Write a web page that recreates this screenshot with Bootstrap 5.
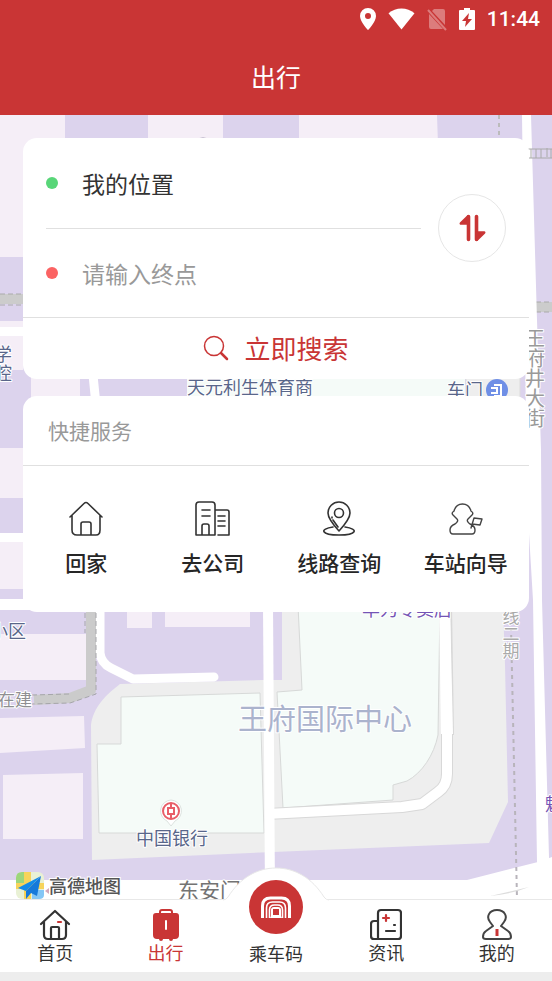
<!DOCTYPE html>
<html lang="zh-CN">
<head>
<meta charset="utf-8">
<meta name="viewport" content="width=device-width, initial-scale=1">
<title>出行</title>
<link href="https://cdn.jsdelivr.net/npm/bootstrap@5.3.0/dist/css/bootstrap.min.css" rel="stylesheet">
<style>
  :root { --brand: #c93535; --ink: #333; --muted: #999; --rule: #e0e0e0; }
  body { font-family: "Noto Sans CJK SC", sans-serif; color: var(--ink); background: #ededed; }
  .app-head { background: var(--brand); }
  .status-line { height: 38px; padding-right: 12px; gap: 12px; font: 500 21px/38px Roboto, sans-serif; }
  .page-title { font-size: 25px; line-height: 77px; font-weight: 400; }
  .map-area { padding: 23px; }
  .map-canvas { inset: 0; }
  .panel-stack { gap: 17px; }
  .panel { background: #fff; border-radius: 14px; }
  .trip-fields { padding: 0 23px; gap: 17px; }
  .trip-row { height: 89px; gap: 24px; }
  .trip-row:first-child { height: 90px; }
  .trip-row + .trip-row { border-top: 1px solid var(--rule); }
  .trip-row input { font-size: 23px; line-height: 34px; color: var(--ink); outline: 0; min-width: 0; }
  .trip-row input::placeholder { color: var(--muted); opacity: 1; }
  .spot { width: 12px; height: 12px; }
  .spot-from { background: #58d678; }
  .spot-to { background: #fb6363; }
  .swap-btn { width: 68px; height: 68px; border: 1px solid #e6e6e6; }
  .search-btn { height: 62px; border-top: 1px solid var(--rule); color: var(--brand); font-size: 26px; line-height: 36px; gap: 15px; padding-bottom: 2px; }
  .quick-title { font-size: 21px; line-height: 69px; padding-left: 25px; color: var(--muted); border-bottom: 1px solid var(--rule); font-weight: 400; }
  .quick-row { padding: 35px 0 34px; }
  .quick-link { font-size: 21px; line-height: 32px; font-weight: 500; color: #262626; gap: 9px; }
  .tab-bar { background: #fff; border-top: 1px solid #e8e8e8; height: 73px; margin-bottom: 9px; }
  .tab-link { font-size: 18px; line-height: 22px; color: var(--ink); padding-top: 8px; }
  .tab-link.active { color: var(--brand); }
  .bump { bottom: 71px; left: 50%; transform: translateX(-50%); }
  .ride-disc { width: 54px; height: 54px; background: var(--brand); margin-top: -28px; margin-bottom: 8px; }
</style>
<script src="https://cdn.jsdelivr.net/npm/bootstrap@5.3.0/dist/js/bootstrap.bundle.min.js"></script>
</head>
<body class="min-vh-100 d-flex flex-column">

<header class="app-head text-white">
  <div class="status-line d-flex justify-content-end align-items-center">
    <svg width="16" height="22" viewBox="0 0 16 22" fill="#fff" fill-rule="evenodd" aria-hidden="true"><path d="M8 0a8 8 0 0 0-8 8c0 6 8 14 8 14s8-8 8-14a8 8 0 0 0-8-8zm0 5a3 3 0 1 1 0 6 3 3 0 0 1 0-6z"/></svg>
    <svg width="27" height="22" viewBox="0 0 28 22" fill="#fff" aria-hidden="true"><path d="M14 22 0.500 5C8-1.500 20-1.500 27.500 5z"/></svg>
    <svg width="20" height="24" viewBox="0 0 20 24" aria-hidden="true"><path fill="#dc7c7c" d="M7 2h9q2 0 2 2v14L5 4zM2 7l14 15H4q-2 0-2-2z"/><path stroke="#dc7c7c" stroke-width="2" d="m1 3 18 20"/></svg>
    <svg width="16" height="22" viewBox="0 0 16 22" aria-hidden="true"><path fill="#fff" d="M5 0h6v2h4a1 1 0 0 1 1 1v18a1 1 0 0 1-1 1H1a1 1 0 0 1-1-1V3a1 1 0 0 1 1-1h4z"/><path fill="#c93535" d="m10 5-7 8h4l-1 6 7-8H9z"/></svg>
    <span>11:44</span>
  </div>
  <h1 class="page-title text-center m-0">出行</h1>
</header>

<main class="map-area flex-grow-1 position-relative overflow-hidden">
  <svg class="map-canvas position-absolute w-100 h-100" viewBox="0 115 552 784" preserveAspectRatio="xMidYMid slice" font-family="'Noto Sans CJK SC', sans-serif" role="img" aria-label="地图">
    <rect y="115" width="552" height="784" fill="#dcd3ed"/>
    <g fill="#f5eef7">
      <path d="M0 115h65v142H0zM148 115h75v30h-75zM299 115h138l1 30H299zM0 321h23v49H0zM31 370h49v30H31zM0 448h30v50H0zM0 542h30v47H0z"/>
      <path d="M0 634h86l2 46H0zM127 605h25v23h-25zM165 605h86v22h-86zM0 718l84-2 1 32-85 5zM3 775l80-2v66H3z"/>
    </g>
    <path fill="#fff" d="M0 327h25v9H0zM0 533h25v9H0zM0 599h40v11H0zM88 370h9l4 40h-9z"/>
    <path fill="#f5fbf8" d="M187 370h278v30H187z"/>
    <path fill="#eee" stroke="#ddd" d="M466 370h54v40h-54z"/>
    <path fill="none" stroke="#ccc" stroke-width="10" d="M0 299h24M528 307h24"/>
    <path fill="none" stroke="#aaa" stroke-dasharray="5 3" d="M0 294h24M0 305h24M528 302h24M528 312h24"/>
    <path fill="none" stroke="#bbb" stroke-width="2" stroke-dasharray="4 4" d="M499 115v24"/>
    <path fill="#c8c1d2" d="m196 139 7-2 7 2z"/>

    <path fill="#eee" d="M91 725c2-18 16-31 29-41l143-4V605h240l2 60 3 137-19 41-216 9-181 8z"/>
    <path fill="#dcd3ed" d="M250 600h32v80h-32z"/>
    <g fill="#f5fbf8" stroke="#d7d9d8">
      <path d="M121 697l139-4 4 140H99l-2-89h24z"/>
      <path d="M298 605l4 85-25 2 6 116 110-8v-15l14-4c15-8 27-26 31-46l2-130z"/>
    </g>
    <path fill="none" stroke="#d8d8d8" stroke-width="12" d="M446 605l2 130"/>
    <path fill="none" stroke="#d8d8d8" stroke-width="12" stroke-linejoin="round" d="M447 734v40q0 12-9 18l-16 12-20 3-135 7"/>
    <path fill="none" stroke="#fff" stroke-width="10" stroke-linejoin="round" d="M445 605l2 130v39q0 12-9 18l-16 12-20 3-135 7"/>
    <path fill="#fff" d="M439 605h11l3 129h-12z"/>
    <path fill="#fff" d="M263 605h10l2 290h-10z"/>
    <path fill="none" stroke="#fff" stroke-width="9" stroke-linejoin="round" stroke-linecap="round" d="M100 605v48q1 10 11 15l22 11 81-2"/>
    <path fill="none" stroke="#cbcbcb" stroke-width="10" stroke-linejoin="round" d="M91 605v85l-21 8-36 2"/>
    <path fill="none" stroke="#a6a6aa" stroke-dasharray="5 3" d="M85 605v28M96 605v89l-26 9-38 1M32 695l37-1"/>
    <path fill="#fff" d="M0 880h467l71-18 14-5v50H0z"/>
    <path fill="#fff" d="M522 115h9l6 205 4 130 1 150 7 257v13l-10 10-2-18-4-262-6-100z"/>
    <path fill="none" stroke="#aaa" d="M528 149h24M528 158h24M531 149v9M536 149v9M541 149v9M547 148v9M551 149v9"/>
    <path fill="none" stroke="#b8b4bb" stroke-width="2" stroke-dasharray="4 4" d="M511 627l6 272"/>
    <path fill="#ddd" d="M490 896q22-2 39-9-17 4-39 9z"/>

    <g fill="#59668a" font-size="18" stroke="#fff" stroke-width="2" paint-order="stroke" stroke-linejoin="round">
      <text x="187" y="394">天元利生体育商</text>
      <text x="447" y="397">车门</text>
      <text x="136" y="845">中国银行</text>
      <text x="-6" y="361">学</text>
      <text x="-6" y="380">腔</text>
      <text x="-10" y="638">小区</text>
    </g>
    <g stroke="#fff" stroke-width="2" paint-order="stroke" stroke-linejoin="round">
      <text x="-2" y="706" font-size="17" fill="#8f8f92">在建</text>
      <text x="238" y="730" font-size="29" fill="#abb3cd">王府国际中心</text>
      <text x="362" y="616" font-size="18" fill="#7454b5">华为专卖店</text>
      <text x="545" y="811" font-size="18" fill="#7454b5">魅</text>
      <text x="178" y="898" font-size="21" fill="#737373">东安门</text>
      <text x="535" y="328" font-size="20" fill="#999" writing-mode="vertical-rl">王府井大街</text>
      <text x="511" y="608" font-size="17" fill="#aaa" writing-mode="vertical-rl">线二期</text>
    </g>
    <circle cx="497" cy="390" r="11" fill="#6f8fe6"/>
    <path fill="none" stroke="#fff" stroke-width="2" d="M494 385h7v11h-7M491 388h6v5h-6"/>
    <path fill="#fff" stroke="#dde3e0" d="M171 800a11 11 0 0 1 4 21l-4 5-4-5a11 11 0 0 1 4-21z"/>
    <g fill="none" stroke="#e85d68" stroke-width="2"><circle cx="171" cy="811" r="8"/><path d="M168 808h6v6h-6zM171 803v5M171 814v5"/></g>

    <g>
      <rect x="16" y="872" width="28" height="27" rx="6" fill="#e9f1d5"/>
      <path fill="#9cd67c" d="M16 883v-5q0-6 6-6h2v11z"/>
      <path fill="#f7d45a" d="M24 872h7v11h13v6H31v10h-7v-10h-8v-6h8z"/>
      <path fill="#84c6f5" d="M32 890h12v5q0 4-5 4h-7z"/>
      <path fill="#138bea" d="M41 876 18 888l8 3z"/><path fill="#1679da" d="m41 876-15 15v8l5-6 6 3z"/>
      <path fill="#d5a7b9" d="m45 891 4-3v6z"/>
      <text x="49" y="893" font-size="18" font-weight="500" fill="#555" stroke="#fff" stroke-width="2" paint-order="stroke">高德地图</text>
    </g>
  </svg>

  <div class="panel-stack position-relative d-flex flex-column">
    <form class="panel">
      <div class="trip-fields d-flex align-items-center">
        <div class="flex-grow-1">
          <div class="trip-row d-flex align-items-center">
            <span class="spot spot-from rounded-circle flex-shrink-0"></span>
            <input class="border-0 p-0 bg-transparent flex-grow-1" type="text" aria-label="起点" value="我的位置">
          </div>
          <div class="trip-row d-flex align-items-center">
            <span class="spot spot-to rounded-circle flex-shrink-0"></span>
            <input class="border-0 p-0 bg-transparent flex-grow-1" type="text" aria-label="终点" placeholder="请输入终点">
          </div>
        </div>
        <button class="swap-btn rounded-circle bg-white p-0 flex-shrink-0 d-flex align-items-center justify-content-center" type="button" aria-label="交换起点和终点">
          <svg width="28" height="28" viewBox="0 0 28 28" fill="#c93535" stroke="#c93535" stroke-linecap="round" stroke-linejoin="round" aria-hidden="true"><path stroke-width="3.600" d="M10.500 2.500v23M18.500 2.500v23"/><path stroke-width="2.500" d="M10 2.300 2.800 9.500H10zM19 25.700l7.200-7.200H19z"/></svg>
        </button>
      </div>
      <button class="search-btn w-100 d-flex align-items-center justify-content-center bg-transparent border-start-0 border-end-0 border-bottom-0" type="submit">
        <svg width="26" height="26" viewBox="0 0 26 26" fill="none" stroke="#c93535" aria-hidden="true"><circle cx="11" cy="11" r="9.500" stroke-width="1.500"/><path stroke-width="2.500" stroke-linecap="round" d="m18 18 6 6"/></svg>
        立即搜索
      </button>
    </form>

    <section class="panel">
      <h2 class="quick-title m-0">快捷服务</h2>
      <div class="quick-row row g-0 text-center">
        <div class="col-3"><a href="#" class="quick-link d-flex flex-column align-items-center text-decoration-none">
          <svg width="36" height="36" viewBox="0 0 36 36" fill="none" stroke="#333" stroke-width="1.600" stroke-linecap="round" stroke-linejoin="round" aria-hidden="true"><path d="M2 16 16 2.500q2-2 4 0L34 16M4 14v15q0 5 5 5h19q4 0 4-5V14M13 34V23q0-2 2-2h6q2 0 2 2v11"/></svg>回家</a></div>
        <div class="col-3"><a href="#" class="quick-link d-flex flex-column align-items-center text-decoration-none">
          <svg width="36" height="36" viewBox="0 0 36 36" fill="none" stroke="#333" stroke-width="1.600" stroke-linecap="round" stroke-linejoin="round" aria-hidden="true"><path d="M20 34H1V4q0-3 3-3h13q3 0 3 3zM20 9h12q2 0 2 2v23H23M7 34V25q0-2 2-2h3q2 0 2 2v9M7 9h8M7 15h8M23 15h7M23 20h7M23 25h7"/></svg>去公司</a></div>
        <div class="col-3"><a href="#" class="quick-link d-flex flex-column align-items-center text-decoration-none">
          <svg width="36" height="36" viewBox="0 0 36 36" fill="none" stroke="#333" stroke-width="1.600" stroke-linecap="round" stroke-linejoin="round" aria-hidden="true"><path d="M18 30Q7 18 7 12a11 11 0 0 1 22 0q0 6-11 18zM12 19l5 7M11 16v1M12 26c-14 2-12 8 6 8s20-6 6-8"/><circle cx="18" cy="12" r="4.500"/></svg>线路查询</a></div>
        <div class="col-3"><a href="#" class="quick-link d-flex flex-column align-items-center text-decoration-none">
          <svg width="36" height="36" viewBox="0 0 36 36" fill="none" stroke="#444" stroke-width="1.400" stroke-linecap="round" stroke-linejoin="round" aria-hidden="true"><path d="M6 10q2-7 8.500-7T23 10q3 2 1 4l-4 4q-2 2 2 5 5 2 5 6 0 4-3 4H5q-3 0-3-4 0-4 5-6 4-3 2-5l-4-4q-2-2 1-4M23 27l3-10 8 1-2 6-8-1"/></svg>车站向导</a></div>
      </div>
    </section>
  </div>
</main>

<nav class="tab-bar position-relative">
  <svg class="bump position-absolute" width="106" height="34" viewBox="0 0 106 34" aria-hidden="true"><path fill="#fff" d="M0 34 5 30A56 56 0 0 1 101 30l5 4z"/><path fill="#fff" stroke="#e8e8e8" d="M0 33q3 0 5-3C17 11 34 1 53 1s36 10 48 29q2 3 5 3"/></svg>
  <div class="row g-0 row-cols-5 text-center position-relative">
    <div class="col"><a href="#" class="tab-link d-flex flex-column align-items-center text-decoration-none">
      <svg width="32" height="33" viewBox="0 0 32 33" fill="none" stroke="#333" stroke-width="2.200" stroke-linecap="round" stroke-linejoin="round" aria-hidden="true"><path d="M2 16 16 3l14 13M5 14v13q0 4 4 4h14q4 0 4-4V14M12 31V20q0-1 1-1h6q1 0 1 1v11"/><path stroke="#c93535" d="M19 14h3"/></svg>首页</a></div>
    <div class="col"><a href="#" class="tab-link active d-flex flex-column align-items-center text-decoration-none" aria-current="page">
      <svg width="32" height="33" viewBox="0 0 32 33" aria-hidden="true"><path fill="none" stroke="#c93535" stroke-width="2" d="M10 7V4q0-2 2-2h8q2 0 2 2v3"/><path fill="#c93535" d="M6 5h20q3 0 3 3v19q0 4-4 4h-2q0 2-2 2t-2-2h-6q0 2-2 2t-2-2H7q-4 0-4-4V8q0-3 3-3z"/><path stroke="#fff" stroke-width="2" stroke-linecap="round" d="M16 13v8"/></svg>出行</a></div>
    <div class="col"><a href="#" class="tab-link d-flex flex-column align-items-center text-decoration-none">
      <span class="ride-disc rounded-circle d-flex align-items-center justify-content-center">
        <svg width="30" height="23" viewBox="0 0 30 23" fill="none" stroke="#fff" aria-hidden="true"><path stroke-width="3" d="M1.500 22V10q0-8 8-8h11q8 0 8 8v12"/><path stroke-width="1.600" d="M5.500 22V12q0-6 6-6h7q6 0 6 6v10M8.500 22v-8q0-5 5-5h3q5 0 5 5v8"/><path fill="#fff" fill-rule="evenodd" stroke="none" d="M13 11h4q3 0 3 3v6l1 2H9l1-2v-6q0-3 3-3zm-1 2v6h6v-6z"/></svg>
      </span>乘车码</a></div>
    <div class="col"><a href="#" class="tab-link d-flex flex-column align-items-center text-decoration-none">
      <svg width="32" height="33" viewBox="0 0 32 33" fill="none" stroke="#333" stroke-width="2.200" stroke-linecap="round" stroke-linejoin="round" aria-hidden="true"><path d="M8 31V5q0-3 3-3h17q3 0 3 3v23q0 3-3 3H4q-3 0-3-3V16q0-3 3-3h4M24 17h1M16 23h9"/><path stroke="#c93535" d="M16 7v6M13 10h6"/></svg>资讯</a></div>
    <div class="col"><a href="#" class="tab-link d-flex flex-column align-items-center text-decoration-none">
      <svg width="32" height="33" viewBox="0 0 32 33" fill="none" stroke="#444" stroke-width="2" stroke-linecap="round" stroke-linejoin="round" aria-hidden="true"><path d="M16 2c-8 0-11 7-7 12l3 4-7 5q-3 2-3 6 0 2 3 2h22q3 0 3-2 0-4-3-6l-7-5 3-4c4-5 1-12-7-12z"/><path stroke="#c93535" stroke-width="3" stroke-linecap="butt" d="M16 21v7"/></svg>我的</a></div>
  </div>
</nav>
</body>
</html>
